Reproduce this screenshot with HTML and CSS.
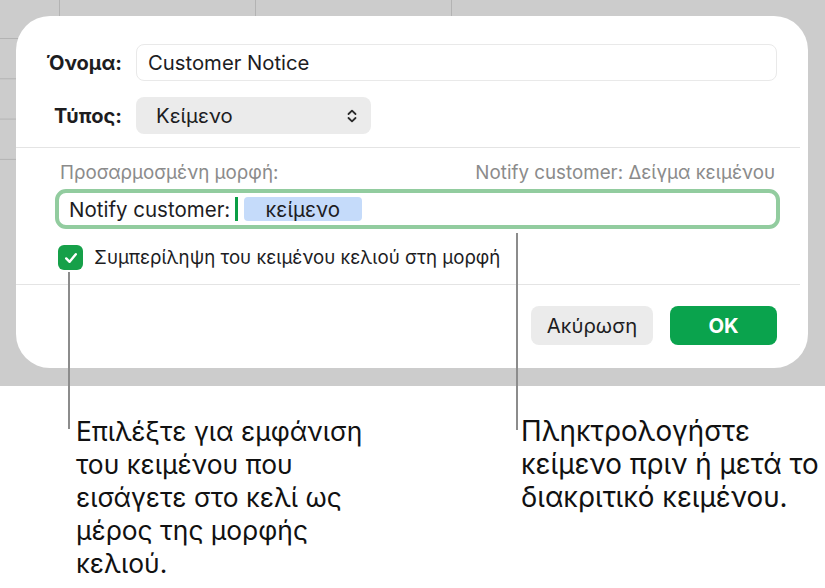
FILE: index.html
```html
<!DOCTYPE html>
<html lang="el">
<head>
<meta charset="utf-8">
<title>Μορφή κελιού</title>
<link rel="stylesheet" href="styles.css">
</head>
<body>
<div class="stage">
  <div class="dialog">
    <div class="fields">
      <label class="label">Όνομα:</label>
      <div class="textfield">Customer Notice</div>
      <label class="label">Τύπος:</label>
      <div class="popup">
        <span>Κείμενο</span>
        <svg class="chev" width="10" height="14" viewBox="0 0 10 14"><path d="M1.5 5 L5 1.6 L8.5 5 M1.5 9 L5 12.4 L8.5 9" fill="none" stroke="#2a2a2a" stroke-width="1.8" stroke-linecap="round" stroke-linejoin="round"/></svg>
      </div>
    </div>
    <div class="sep"></div>
    <div class="format">
      <div class="format-head">
        <span>Προσαρμοσμένη μορφή:</span>
        <span>Notify customer: Δείγμα κειμένου</span>
      </div>
      <div class="format-field">
        <span>Notify customer:</span>
        <span class="caret"></span>
        <span class="token">κείμενο</span>
      </div>
      <div class="check-row">
        <span class="checkbox">
          <svg width="16" height="16" viewBox="0 0 16 16"><path d="M3.2 8.4 L6.6 11.8 L12.8 4.2" fill="none" stroke="#fff" stroke-width="2.4" stroke-linecap="round" stroke-linejoin="round"/></svg>
        </span>
        <span>Συμπερίληψη του κειμένου κελιού στη μορφή</span>
      </div>
    </div>
    <div class="sep"></div>
    <div class="buttons">
      <button class="btn btn-cancel">Ακύρωση</button>
      <button class="btn btn-ok">OK</button>
    </div>
  </div>
</div>
<div class="notes">
  <p class="note note-left">Επιλέξτε για εμφάνιση<br>του κειμένου που<br>εισάγετε στο κελί ως<br>μέρος της μορφής<br>κελιού.</p>
  <p class="note note-right">Πληκτρολογήστε<br>κείμενο πριν ή μετά το<br>διακριτικό κειμένου.</p>
</div>
<div class="callout callout-left"></div>
<div class="callout callout-right"></div>
</body>
</html>
```
FILE: styles.css
```css
* { box-sizing: border-box; }
html, body { margin: 0; padding: 0; }
body {
  width: 825px;
  height: 588px;
  overflow: hidden;
  background: #ffffff;
  font-family: "Inter", "Noto Sans", sans-serif;
  color: #1d1d1f;
  position: relative;
}
.stage {
  position: relative;
  background: #cccccc;
  padding: 16px 17px 18px 16px;
  height: 386px;
}
.stage::before {
  content: "";
  position: absolute;
  left: 0;
  top: 0;
  width: 470px;
  height: 160px;
  background-image:
    linear-gradient(to right, #b3b3b3 1px, transparent 1px),
    linear-gradient(to bottom, #b3b3b3 1px, transparent 1px);
  background-size: 196px 100%, 100% 40.3px;
  background-position: 59px 0, 0 38px;
}
.dialog {
  position: relative;
  background: #ffffff;
  border-radius: 34px;
  height: 352px;
  width: 792px;
}
.fields {
  display: grid;
  grid-template-columns: 106px 1fr;
  column-gap: 14px;
  row-gap: 16px;
  padding: 28px 31px 13px 0;
  align-items: center;
}
.label {
  text-align: right;
  font-weight: 700;
  font-size: 20px;
}
.textfield {
  height: 37px;
  border: 1px solid #e9e9e9;
  border-radius: 8px;
  font-size: 20.3px;
  padding: 0 11px;
  display: flex;
  align-items: center;
}
.popup {
  width: 235px;
  height: 37px;
  background: #ebebeb;
  border-radius: 8px;
  font-size: 20.3px;
  padding: 0 14px 0 20px;
  display: flex;
  align-items: center;
  justify-content: space-between;
}
.chev { display: block; }
.sep {
  height: 1px;
  background: #e4e4e4;
  margin-right: 8px;
}
.format {
  padding: 12px 28px 14px 39px;
}
.format-head {
  display: flex;
  justify-content: space-between;
  font-size: 18.8px;
  color: #8b8b8b;
  padding: 0 5px 0 5px;
  height: 24px;
  align-items: center;
}
.format-field {
  margin-top: 5px;
  height: 40px;
  border: 4px solid #92cc9f;
  border-radius: 11px;
  display: flex;
  align-items: center;
  padding: 0 10px;
  font-size: 20.5px;
}
.caret {
  width: 2.5px;
  height: 24px;
  background: #0a9e45;
  margin-left: 5px;
}
.token {
  margin-left: 6px;
  width: 118px;
  height: 24px;
  background: #c5dbfa;
  border-radius: 4px;
  display: flex;
  align-items: center;
  justify-content: center;
}
.check-row {
  display: flex;
  align-items: center;
  gap: 11px;
  margin-top: 16px;
  padding-left: 3px;
  font-size: 18.7px;
  height: 25px;
}
.checkbox {
  width: 25px;
  height: 25px;
  border-radius: 6px;
  background: #16a049;
  display: flex;
  align-items: center;
  justify-content: center;
}
.checkbox svg { display: block; }
.buttons {
  display: flex;
  justify-content: flex-end;
  gap: 17px;
  padding: 21px 31px 0 0;
}
.btn {
  border: 0;
  height: 39px;
  border-radius: 8px;
  font-family: inherit;
  font-size: 20.3px;
  padding: 0;
}
.btn-cancel {
  width: 122px;
  background: #ebebeb;
  color: #1d1d1f;
}
.btn-ok {
  width: 107px;
  background: #0aa34d;
  color: #ffffff;
  font-weight: 700;
}
.notes {
  display: flex;
  padding: 29px 0 0 76px;
}
.note {
  margin: 0;
  font-size: 26.4px;
  line-height: 33px;
  white-space: nowrap;
  color: #111;
}
.note-left { width: 445px; }
.note-right { font-size: 27.8px; letter-spacing: 0; }
.callout {
  position: absolute;
  width: 2px;
  background: #8c8c8c;
}
.callout-left { left: 68px; top: 272px; height: 157px; }
.callout-right { left: 516px; top: 233px; height: 197px; }
```
